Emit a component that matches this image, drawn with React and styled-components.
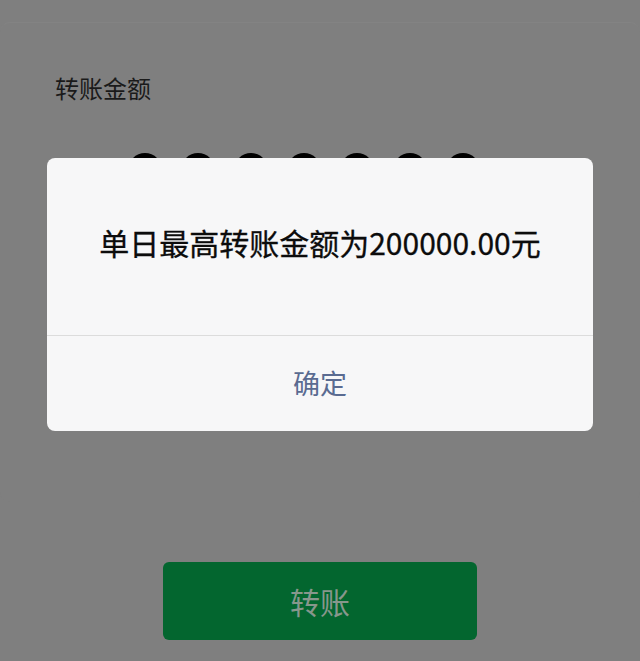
import styled, { createGlobalStyle } from 'styled-components'

const GlobalStyle = createGlobalStyle`
  html, body {
    margin: 0;
    padding: 0;
    background: #7f7f7f;
  }
  body {
    font-family: "Noto Sans CJK SC", "Noto Sans", sans-serif;
  }
`

const Page = styled.div`
  position: relative;
  width: 640px;
  height: 661px;
  overflow: hidden;
  background: #7f7f7f;
  padding-top: 22px;
  box-sizing: border-box;
`

const Card = styled.div`
  height: 480px;
  border-radius: 10px;
  border-top: 1px solid #838383;
  background: #7f7f7f;
  padding: 50px 0 0 55px;
  box-sizing: border-box;
`

const Label = styled.div`
  font-size: 24px;
  line-height: 30px;
  color: #1a1a1a;
`

const Dots = styled.div`
  display: flex;
  gap: 19px;
  margin: 50px 0 0 73px;
`

const Dot = styled.span`
  width: 34px;
  height: 34px;
  border-radius: 50%;
  background: #000;
`

const Footer = styled.div`
  display: flex;
  justify-content: center;
  margin-top: 60px;
`

const SubmitButton = styled.div`
  width: 314px;
  height: 78px;
  border-radius: 6px;
  background: #03662f;
  color: #87978c;
  font-size: 30px;
  display: flex;
  align-items: center;
  justify-content: center;
`

const Dialog = styled.div`
  position: absolute;
  left: 47px;
  top: 158px;
  width: 546px;
  height: 273px;
  border-radius: 8px;
  background: #f7f7f8;
  display: flex;
  flex-direction: column;
  overflow: hidden;
`

const Message = styled.div`
  height: 178px;
  padding-bottom: 10px;
  box-sizing: border-box;
  display: flex;
  align-items: center;
  justify-content: center;
  font-size: 30px;
  -webkit-text-stroke: 0.3px #0c0c0c;
  color: #0c0c0c;
  border-bottom: 1px solid #dcdcdc;
`

const Confirm = styled.div`
  flex: 1;
  display: flex;
  align-items: center;
  justify-content: center;
  padding-bottom: 3px;
  font-size: 27px;
  color: #5a6b91;
`

export default function App() {
  return (
    <>
      <GlobalStyle />
      <Page>
        <Card>
          <Label>转账金额</Label>
          <Dots>
            {Array.from({ length: 7 }).map((_, i) => (
              <Dot key={i} />
            ))}
          </Dots>
        </Card>
        <Footer>
          <SubmitButton>转账</SubmitButton>
        </Footer>
        <Dialog>
          <Message>单日最高转账金额为200000.00元</Message>
          <Confirm>确定</Confirm>
        </Dialog>
      </Page>
    </>
  )
}
